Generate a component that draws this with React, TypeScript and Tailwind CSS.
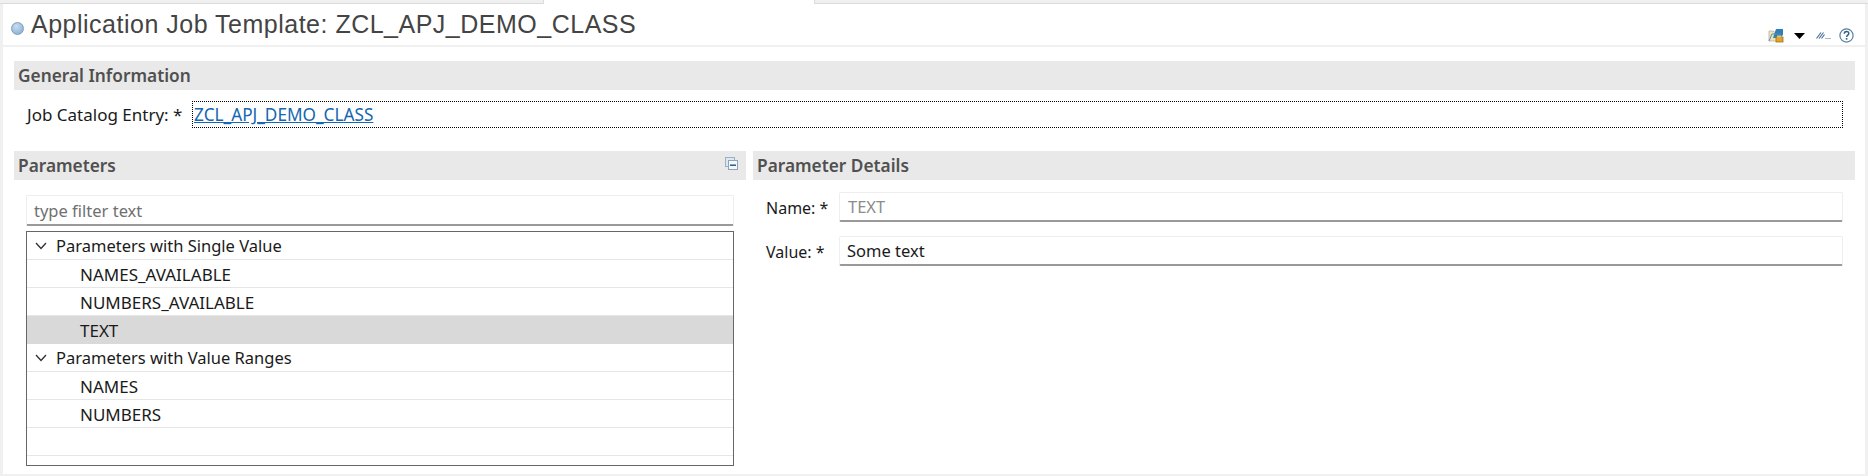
const UI_FONT = 'font-["Noto_Sans","Open_Sans",sans-serif]';

function TemplateIcon() {
  return (
    <svg className="w-[16px] h-[15px]" viewBox="0 0 16 15">
      <path d="M1 3h4l1 1h7v9H1z" fill="#f3e3b4" stroke="#b9b39a" strokeWidth="0.8" />
      <path d="M8 1h7v6l-4 3H5z" fill="#2f7fb8" />
      <path d="M1 13l3-7h9" fill="none" stroke="#4f8fc0" strokeWidth="1" />
      <rect x="8" y="9" width="7" height="5" fill="#e0a52c" stroke="#9a7420" strokeWidth="0.8" />
      <rect x="9" y="7.5" width="4" height="2" fill="#edc566" />
    </svg>
  );
}

function LinesIcon() {
  return (
    <svg className="w-[15px] h-[7px]" viewBox="0 0 15 7">
      <path d="M0.5 6.5L5 0.5M3 6.5L7.5 0.5M5.5 6.5L8.5 2.5" stroke="#4f7396" strokeWidth="1.2" fill="none" />
      <path d="M9.5 6.5h1M11.5 6.5h1M13.5 6.5h1" stroke="#5f7080" strokeWidth="1" />
    </svg>
  );
}

function HelpIcon() {
  return (
    <svg className="w-[15px] h-[15px]" viewBox="0 0 15 15">
      <circle cx="7.5" cy="7.5" r="6.6" fill="#fff" stroke="#55809f" strokeWidth="1.2" />
      <path d="M5.3 5.7c0-3 4.5-3 4.5-.3 0 1.7-2.2 1.7-2.2 3.5" fill="none" stroke="#2f6488" strokeWidth="1.5" />
      <rect x="6.8" y="10" width="1.6" height="1.7" fill="#2f6488" />
    </svg>
  );
}

function CollapseIcon() {
  return (
    <svg className="w-[13px] h-[13px]" viewBox="0 0 13 13">
      <rect x="0.5" y="0.5" width="9" height="9" fill="#dbe8f3" stroke="#9fb0c0" />
      <rect x="3.5" y="3.5" width="9" height="9" fill="#f2f8fd" stroke="#8fa3b5" />
      <rect x="5" y="7.5" width="6" height="1.4" fill="#1f4f78" />
    </svg>
  );
}

function Chevron() {
  return (
    <svg className="w-[12px] h-[8px] shrink-0" viewBox="0 0 12 8">
      <path d="M1 1l5 5.5L11 1" fill="none" stroke="#303030" strokeWidth="1.3" />
    </svg>
  );
}

function SectionBar({ title, children }: { title: string; children?: React.ReactNode }) {
  return (
    <div className="h-[29px] bg-[#e9e9e9] flex items-center justify-between pl-[4px] pr-[9px]">
      <span className="text-[17.3px] font-semibold text-[#505050] leading-none">{title}</span>
      {children}
    </div>
  );
}

function TreeGroup({ label }: { label: string }) {
  return (
    <div className="h-[28px] border-b border-[#e6e6e6] flex items-center pl-[8px] text-[16.5px] text-[#1a1a1a]">
      <Chevron />
      <span className="ml-[9px] pt-[2px]">{label}</span>
    </div>
  );
}

function TreeItem({ label, selected }: { label: string; selected?: boolean }) {
  return (
    <div
      className={
        selected
          ? 'h-[28px] bg-[#d9d9d9] flex items-center pl-[53px] pt-[1px] text-[17px] text-[#1a1a1a]'
          : 'h-[28px] border-b border-[#e6e6e6] flex items-center pl-[53px] pt-[2px] text-[17px] text-[#1a1a1a]'
      }
    >
      {label}
    </div>
  );
}

function DetailRow({ label, value, muted }: { label: string; value: string; muted?: boolean }) {
  return (
    <div className="flex items-center h-[30px]">
      <span className="w-[73px] shrink-0 text-[16px] text-[#1a1a1a] pt-[1px]">{label}</span>
      <div
        className={
          muted
            ? 'flex-1 h-full flex items-center pl-[8px] pt-[1px] border border-[#eeeeee] border-b-2 border-b-[#999999] rounded-[2px] text-[16.5px] text-[#8c8c8c]'
            : 'flex-1 h-full flex items-center pl-[7px] pt-[1px] border border-[#eeeeee] border-b-2 border-b-[#999999] rounded-[2px] text-[16.5px] text-[#1a1a1a]'
        }
      >
        {value}
      </div>
    </div>
  );
}

export default function App() {
  return (
    <div className={`w-[1868px] h-[476px] flex flex-col bg-white overflow-hidden ${UI_FONT}`}>
      <div className="h-[4px] flex shrink-0">
        <div className="w-[544px] bg-[#f0f0f0] border-r border-b border-[#dcdcdc]" />
        <div className="w-[270px]" />
        <div className="flex-1 bg-[#f0f0f0] border-l border-b border-[#dcdcdc]" />
      </div>

      <div className="flex-1 flex flex-col border-l-[3px] border-r-[3px] border-b-[2px] border-[#f0f0f0]">
        <div className="h-[43px] shrink-0 border-b-2 border-[#f0f0f0] flex items-center justify-between pl-[8px] pr-[11px]">
          <div className="flex items-center">
            <div className="w-[13px] h-[13px] mt-[8px] rounded-full border border-[#7f9db8] bg-[radial-gradient(circle_at_40%_30%,#c7def2,#7fa8cf)]" />
            <span className="ml-[7px] font-['Liberation_Sans',sans-serif] text-[25px] tracking-[0.5px] text-[#444444] leading-none">
              Application Job Template: ZCL_APJ_DEMO_CLASS
            </span>
          </div>
          <div className="flex items-center mt-[22px]">
            <TemplateIcon />
            <svg className="w-[11px] h-[6px] ml-[10px]" viewBox="0 0 11 6">
              <path d="M0 0h11L5.5 6z" fill="#000" />
            </svg>
            <div className="ml-[11px]">
              <LinesIcon />
            </div>
            <div className="ml-[8px]">
              <HelpIcon />
            </div>
          </div>
        </div>

        <div className="pl-[11px] pr-[10px] pt-[14px]">
          <SectionBar title="General Information" />
          <div className="flex items-center mt-[11px] pl-[13px] pr-[12px]">
            <span className="w-[165px] shrink-0 text-[17px] text-[#1a1a1a]">Job Catalog Entry: *</span>
            <div className="flex-1 h-[27px] border border-dotted border-black flex items-center pl-[1px]">
              <a href="#" className="text-[17.2px] text-[#1467b0] underline">
                ZCL_APJ_DEMO_CLASS
              </a>
            </div>
          </div>

          <div className="flex gap-[7px] mt-[23px]">
            <div className="w-[732px] shrink-0">
              <SectionBar title="Parameters">
                <div className="mb-[5px] -mr-[1px]">
                  <CollapseIcon />
                </div>
              </SectionBar>
              <div className="mt-[15px] ml-[12px] w-[708px] h-[31px] flex items-center px-[7px] pt-[3px] border border-[#eeeeee] border-b-2 border-b-[#999999] rounded-[2px] text-[16.5px] text-[#707070]">
                type filter text
              </div>
              <div className="mt-[5px] ml-[12px] w-[708px] h-[235px] border border-[#666666] overflow-hidden">
                <TreeGroup label="Parameters with Single Value" />
                <TreeItem label="NAMES_AVAILABLE" />
                <TreeItem label="NUMBERS_AVAILABLE" />
                <TreeItem label="TEXT" selected />
                <TreeGroup label="Parameters with Value Ranges" />
                <TreeItem label="NAMES" />
                <TreeItem label="NUMBERS" />
                <TreeItem label="" />
              </div>
            </div>

            <div className="flex-1">
              <SectionBar title="Parameter Details" />
              <div className="mt-[12px] pl-[13px] pr-[12px] flex flex-col gap-[14px]">
                <DetailRow label="Name: *" value="TEXT" muted />
                <DetailRow label="Value: *" value="Some text" />
              </div>
            </div>
          </div>
        </div>
      </div>
    </div>
  );
}
